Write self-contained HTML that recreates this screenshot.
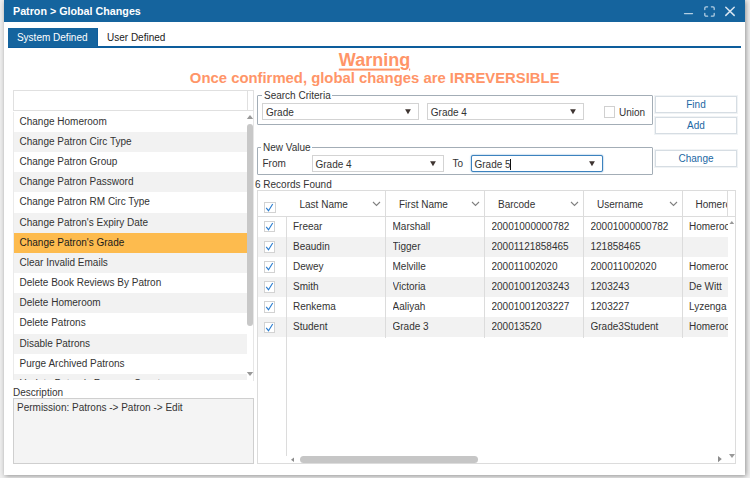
<!DOCTYPE html>
<html>
<head>
<meta charset="utf-8">
<title>Patron &gt; Global Changes</title>
<style>
html,body{margin:0;padding:0;}
body{width:750px;height:478px;overflow:hidden;background:#efefef;position:relative;
  font-family:"Liberation Sans",Arial,sans-serif;font-size:10px;color:#333;}
.abs{position:absolute;}
.x{display:inline-block;white-space:nowrap;}
#win{position:absolute;left:4px;top:0;width:741px;height:475px;background:#fff;
  box-shadow:1px 1px 5px rgba(0,0,0,.4);}
#title{position:absolute;left:4px;top:0;width:741px;height:21.5px;background:#15649e;}
#title .t{position:absolute;left:9px;top:4px;color:#fff;font-weight:bold;font-size:11px;line-height:14px;white-space:nowrap;}
#tabline{position:absolute;left:8px;top:46.500px;width:733px;height:1.5px;background:#15649e;}
.tab{position:absolute;top:28px;height:19px;line-height:19px;font-size:10px;white-space:nowrap;}
.tab.on{left:8px;width:88.5px;background:#15649e;color:#fff;text-align:center;border-right:1px solid #0d5d9c;}
.tab.off{left:107px;color:#222;}
.warn{position:absolute;left:4px;width:741px;text-align:center;color:#ff9568;font-weight:bold;white-space:nowrap;}
#lsearch{position:absolute;left:13px;top:90px;width:239px;height:18.5px;border:1px solid #e0e0e0;background:#fff;}
#lsearch i{position:absolute;left:232.500px;top:0;width:1px;height:18.5px;background:#e0e0e0;}
#list{position:absolute;left:13px;top:111.600px;width:233.5px;height:268.9px;overflow:hidden;border-left:1px solid #ebebeb;box-sizing:border-box;}
#list div{height:20.2px;line-height:20.2px;padding-left:5.5px;white-space:nowrap;font-size:10px;color:#333;}
#list div:nth-child(even){background:#f2f2f2;}
#list div.sel{background:#fdbb4e;color:#1a1a1a;}
.tri-u{position:absolute;width:0;height:0;border-left:3px solid transparent;border-right:3px solid transparent;border-bottom:4px solid #9a9a9a;}
.tri-d{position:absolute;width:0;height:0;border-left:3px solid transparent;border-right:3px solid transparent;border-top:4px solid #9a9a9a;}
.tri-l{position:absolute;width:0;height:0;border-top:2.5px solid transparent;border-bottom:2.5px solid transparent;border-right:4px solid #8a8a8a;}
.tri-r{position:absolute;width:0;height:0;border-top:2.5px solid transparent;border-bottom:2.5px solid transparent;border-left:4px solid #8a8a8a;}
#dbox{position:absolute;left:13px;top:398px;width:239px;height:64px;border:1px solid #cfcfcf;background:#f4f4f4;}
.fs{position:absolute;border:1px solid #a3adb6;border-radius:1px;}
.fs .lg{position:absolute;left:3px;top:-7px;background:#fff;padding:0 1px 0 2px;line-height:14px;font-size:10px;white-space:nowrap;}
.sel2{position:absolute;height:14.5px;border:1px solid #d3d3d3;background:#fff;line-height:15px;font-size:10px;}
.sel2 span.v{position:absolute;left:3px;top:1px;white-space:nowrap;}
.sel2 svg{position:absolute;right:6.8px;top:5px;}
.sel2.foc{border-color:#3c82be;box-shadow:0 0 1.5px #3c82be;border-radius:2px;}
.btn{position:absolute;left:655px;width:80px;height:15px;border:1px solid #d6dde3;box-shadow:0 0 0 1px #f0f3f5;background:#fff;color:#1b68a4;text-align:center;line-height:15px;font-size:10px;}
.lbl{position:absolute;line-height:14px;font-size:10px;white-space:nowrap;}
#grid{position:absolute;left:257px;top:190px;width:477px;height:271.500px;border:1px solid #dcdcdc;background:#fff;overflow:hidden;}
.hd{position:absolute;top:0;height:25.5px;border-right:1px solid #dcdcdc;border-bottom:1px solid #dcdcdc;line-height:25px;font-size:10px;white-space:nowrap;overflow:hidden;box-sizing:border-box;}
.hd span.h{position:absolute;left:13px;top:1px;}
.row{position:absolute;left:0;width:469.500px;height:20.15px;}
.row.alt{background:#f2f2f2;}
.c{position:absolute;top:0;height:20.15px;line-height:20.15px;white-space:nowrap;overflow:hidden;font-size:10px;}
.vl{position:absolute;width:1px;background:#dcdcdc;}
.cb{position:absolute;width:9.5px;height:9.5px;border:1px solid #d2d2d2;background:#fff;}
.cb svg{position:absolute;left:-1px;top:-1px;}
</style>
</head>
<body>
<div id="win"></div>
<div id="title"><div class="t"><span class="x" style="transform:scaleX(0.975);transform-origin:0 50%">Patron &gt; Global Changes</span></div><svg class="abs" style="left:676px;top:2px" width="60" height="18" viewBox="0 0 60 18"><g stroke="#d6e4f0" stroke-width="1.5" fill="none" stroke-linecap="round"><path d="M4.500 11.600h8" stroke="#b4cfe3" stroke-width="1.300"/><path stroke="#b4cfe3" stroke-width="1.300" d="M24.800 7.600v-1.500a1.300 1.300 0 0 1 1.300 -1.300h1.500M31.400 4.800h1.500a1.300 1.300 0 0 1 1.300 1.300v1.500M34.200 11.400v1.500a1.300 1.300 0 0 1 -1.300 1.300h-1.500M27.600 14.200h-1.500a1.300 1.300 0 0 1 -1.300 -1.300v-1.500"/><path d="M45.800 5.200l8.400 8.200M54.200 5.200l-8.400 8.200"/></g></svg></div>
<div class="abs" style="left:8px;top:46px;width:733px;height:2px;background:#0d5d9c"></div>
<div class="tab on">System Defined</div>
<div class="tab off">User Defined</div>
<div class="warn" style="top:49px;font-size:18px;line-height:20px"><span class="x" style="text-decoration:underline;text-decoration-thickness:1.5px;text-underline-offset:2.5px;transform:translateY(0.6px)">Warning</span></div>
<div class="warn" style="top:69px;font-size:15px;line-height:18px"><span class="x" style="transform:scaleX(0.99);transform-origin:50% 50%">Once confirmed, global changes are IRREVERSIBLE</span></div>
<div id="lsearch"><i></i></div>
<div id="list"><div>Change Homeroom</div><div>Change Patron Circ Type</div><div>Change Patron Group</div><div>Change Patron Password</div><div>Change Patron RM Circ Type</div><div>Change Patron's Expiry Date</div><div class="sel">Change Patron's Grade</div><div>Clear Invalid Emails</div><div>Delete Book Reviews By Patron</div><div>Delete Homeroom</div><div>Delete Patrons</div><div>Disable Patrons</div><div>Purge Archived Patrons</div><div>Update Patron's Reserve Count</div></div>
<div class="abs" style="left:246.500px;top:110.500px;width:6.5px;height:270px;background:#fff;border-right:1px solid #e6e6e6"></div>
<svg class="abs" style="left:246px;top:114px" width="8" height="6" viewBox="0 0 8 6"><path d="M0.800 5L4 1L7.200 5z" fill="#999"/></svg>
<div class="abs" style="left:247px;top:124px;width:6px;height:202px;background:#c8c8c8;border-radius:3px"></div>
<svg class="abs" style="left:246px;top:370.500px" width="8" height="6" viewBox="0 0 8 6"><path d="M0.800 1L4 5L7.200 1z" fill="#999"/></svg>
<div class="lbl" style="left:13px;top:386px">Description</div>
<div id="dbox"><span class="abs" style="left:3px;top:2px;line-height:14px">Permission: Patrons -&gt; Patron -&gt; Edit</span></div>
<div class="fs" style="left:257px;top:95px;width:394px;height:28px"><div class="lg" style="left:4px">Search Criteria</div></div>
<div class="sel2" style="left:262px;top:103.2px;width:154.5px"><span class="v">Grade</span><svg width="6" height="5.500" viewBox="0 0 6 5.500"><path d="M0.100 0.300L5.900 0.300L3 5.300z" fill="#3e3431"/></svg></div>
<div class="sel2" style="left:426.8px;top:103.2px;width:155px"><span class="v">Grade 4</span><svg width="6" height="5.500" viewBox="0 0 6 5.500"><path d="M0.100 0.300L5.900 0.300L3 5.300z" fill="#3e3431"/></svg></div>
<div class="cb" style="left:603.500px;top:106px;border-color:#d0d0d0"></div>
<div class="lbl" style="left:619px;top:106px">Union</div>
<div class="btn" style="top:96px">Find</div>
<div class="btn" style="top:117.300px">Add</div>
<div class="btn" style="top:149.500px">Change</div>
<div class="fs" style="left:257px;top:147px;width:394px;height:26px"><div class="lg">New Value</div></div>
<div class="lbl" style="left:262.500px;top:157px">From</div>
<div class="sel2" style="left:311.5px;top:155.2px;width:130px"><span class="v">Grade 4</span><svg width="6" height="5.500" viewBox="0 0 6 5.500"><path d="M0.100 0.300L5.900 0.300L3 5.300z" fill="#3e3431"/></svg></div>
<div class="lbl" style="left:452.500px;top:157px">To</div>
<div class="sel2 foc" style="left:470.5px;top:155.2px;width:130px"><span class="v">Grade 5<i style="position:absolute;left:35.500px;top:2px;width:1px;height:11px;background:#111"></i></span><svg width="6" height="5.500" viewBox="0 0 6 5.500"><path d="M0.100 0.300L5.900 0.300L3 5.300z" fill="#3e3431"/></svg></div>
<div class="lbl" style="left:255px;top:177.600px">6 Records Found</div>
<div id="grid"><div class="hd" style="left:0;width:28.5px;border-right:none"></div>
<div class="hd" style="left:28.5px;width:99.5px"><span class="h">Last Name</span></div>
<div class="hd" style="left:128px;width:99px"><span class="h">First Name</span></div>
<div class="hd" style="left:227px;width:99px"><span class="h">Barcode</span></div>
<div class="hd" style="left:326px;width:98.5px"><span class="h">Username</span></div>
<div class="hd" style="left:424.5px;width:45px"><span class="h">Homeroom</span></div>
<div class="hd" style="left:469.5px;width:8px;border-right:none"></div>
<div class="cb" style="left:6px;top:10.500px"><svg width="12" height="12" viewBox="0 0 12 12"><path d="M2.200 5.900L4.500 8.700L8.700 2" stroke="#2a7dd0" stroke-width="1.100" fill="none"/></svg></div>
<svg class="abs" style="left:114.3px;top:10.300px" width="9" height="6" viewBox="0 0 9 6"><path d="M1 1l3.500 3.500L8 1" stroke="#808080" stroke-width="1.100" fill="none"/></svg>
<svg class="abs" style="left:213.3px;top:10.300px" width="9" height="6" viewBox="0 0 9 6"><path d="M1 1l3.500 3.500L8 1" stroke="#808080" stroke-width="1.100" fill="none"/></svg>
<svg class="abs" style="left:312.3px;top:10.300px" width="9" height="6" viewBox="0 0 9 6"><path d="M1 1l3.500 3.500L8 1" stroke="#808080" stroke-width="1.100" fill="none"/></svg>
<svg class="abs" style="left:410.8px;top:10.300px" width="9" height="6" viewBox="0 0 9 6"><path d="M1 1l3.500 3.500L8 1" stroke="#808080" stroke-width="1.100" fill="none"/></svg>
<div class="row" style="top:25.6px"><div class="cb" style="left:5.500px;top:4.300px"><svg width="12" height="12" viewBox="0 0 12 12"><path d="M2.200 5.900L4.500 8.700L8.700 2" stroke="#2a7dd0" stroke-width="1.100" fill="none"/></svg></div><div class="c" style="left:35.0px;width:93.0px">Freear</div><div class="c" style="left:134.5px;width:92.5px">Marshall</div><div class="c" style="left:233.5px;width:92.5px">20001000000782</div><div class="c" style="left:332.5px;width:92.0px">20001000000782</div><div class="c" style="left:431.0px;width:38.5px">Homeroom</div></div>
<div class="row alt" style="top:45.8px"><div class="cb" style="left:5.500px;top:4.300px"><svg width="12" height="12" viewBox="0 0 12 12"><path d="M2.200 5.900L4.500 8.700L8.700 2" stroke="#2a7dd0" stroke-width="1.100" fill="none"/></svg></div><div class="c" style="left:35.0px;width:93.0px">Beaudin</div><div class="c" style="left:134.5px;width:92.5px">Tigger</div><div class="c" style="left:233.5px;width:92.5px">20001121858465</div><div class="c" style="left:332.5px;width:92.0px">121858465</div><div class="c" style="left:431.0px;width:38.5px"></div></div>
<div class="row" style="top:65.9px"><div class="cb" style="left:5.500px;top:4.300px"><svg width="12" height="12" viewBox="0 0 12 12"><path d="M2.200 5.900L4.500 8.700L8.700 2" stroke="#2a7dd0" stroke-width="1.100" fill="none"/></svg></div><div class="c" style="left:35.0px;width:93.0px">Dewey</div><div class="c" style="left:134.5px;width:92.5px">Melville</div><div class="c" style="left:233.5px;width:92.5px">200011002020</div><div class="c" style="left:332.5px;width:92.0px">200011002020</div><div class="c" style="left:431.0px;width:38.5px">Homeroom</div></div>
<div class="row alt" style="top:86.0px"><div class="cb" style="left:5.500px;top:4.300px"><svg width="12" height="12" viewBox="0 0 12 12"><path d="M2.200 5.900L4.500 8.700L8.700 2" stroke="#2a7dd0" stroke-width="1.100" fill="none"/></svg></div><div class="c" style="left:35.0px;width:93.0px">Smith</div><div class="c" style="left:134.5px;width:92.5px">Victoria</div><div class="c" style="left:233.5px;width:92.5px">20001001203243</div><div class="c" style="left:332.5px;width:92.0px">1203243</div><div class="c" style="left:431.0px;width:38.5px">De Witt</div></div>
<div class="row" style="top:106.2px"><div class="cb" style="left:5.500px;top:4.300px"><svg width="12" height="12" viewBox="0 0 12 12"><path d="M2.200 5.900L4.500 8.700L8.700 2" stroke="#2a7dd0" stroke-width="1.100" fill="none"/></svg></div><div class="c" style="left:35.0px;width:93.0px">Renkema</div><div class="c" style="left:134.5px;width:92.5px">Aaliyah</div><div class="c" style="left:233.5px;width:92.5px">20001001203227</div><div class="c" style="left:332.5px;width:92.0px">1203227</div><div class="c" style="left:431.0px;width:38.5px">Lyzenga</div></div>
<div class="row alt" style="top:126.3px"><div class="cb" style="left:5.500px;top:4.300px"><svg width="12" height="12" viewBox="0 0 12 12"><path d="M2.200 5.900L4.500 8.700L8.700 2" stroke="#2a7dd0" stroke-width="1.100" fill="none"/></svg></div><div class="c" style="left:35.0px;width:93.0px">Student</div><div class="c" style="left:134.5px;width:92.5px">Grade 3</div><div class="c" style="left:233.5px;width:92.5px">200013520</div><div class="c" style="left:332.5px;width:92.0px">Grade3Student</div><div class="c" style="left:431.0px;width:38.5px">Homeroom</div></div>
<div class="vl" style="left:127px;top:25px;height:121.5px"></div>
<div class="vl" style="left:226px;top:25px;height:121.5px"></div>
<div class="vl" style="left:325px;top:25px;height:121.5px"></div>
<div class="vl" style="left:423.5px;top:25px;height:121.5px"></div>
<div class="vl" style="left:27.5px;top:25px;height:239.500px"></div>
<svg class="abs" style="left:470.8px;top:29.5px" width="5.6" height="3.6" viewBox="0 0 5.6 3.6"><path d="M0 3.6L2.8 0L5.6 3.6z" fill="#999"/></svg>
<svg class="abs" style="left:470.5px;top:262.5px" width="6" height="4" viewBox="0 0 6 4"><path d="M0 0L3.0 4L6 0z" fill="#999"/></svg>
<svg class="abs" style="left:32.7px;top:266px" width="3.6" height="5.4" viewBox="0 0 3.6 5.4"><path d="M3.6 0L0 2.7L3.6 5.4z" fill="#8c8c8c"/></svg>
<svg class="abs" style="left:460px;top:265.4px" width="3.8" height="6.2" viewBox="0 0 3.8 6.2"><path d="M0 0L3.8 3.1L0 6.2z" fill="#8c8c8c"/></svg>
<div class="abs" style="left:42px;top:265px;width:177.500px;height:6.5px;background:#c6c6c6;border-radius:3.5px"></div></div>
</body>
</html>
